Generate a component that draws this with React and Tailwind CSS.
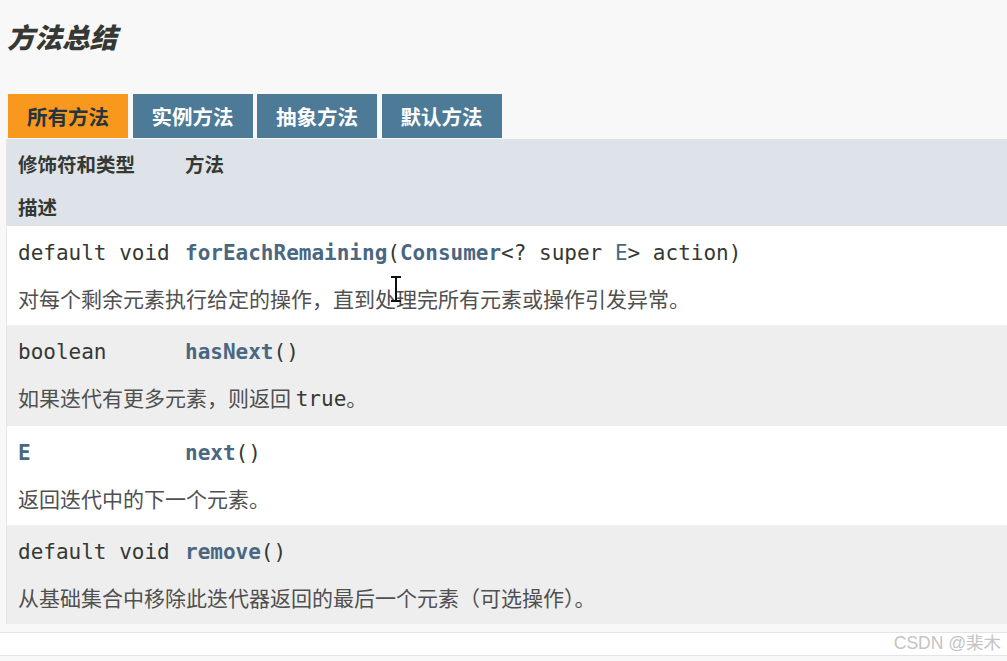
import React from "react";

const mono = "font-['DejaVu_Sans_Mono',monospace]";
const cjk = "font-['Noto_Sans_CJK_SC',sans-serif]";

function Link({ children, className = "" }) {
  return <span className={`text-[#4a6782] font-bold ${className}`}>{children}</span>;
}

function Row({ bg, type, method, desc }) {
  return (
    <div className={`grid grid-cols-[167px_1fr] ${bg}`}>
      <div className={`pl-[11px] pt-[13px] pb-[4px] ${mono} text-[21px] leading-[29px] text-[#353833] whitespace-nowrap`}>
        {type}
      </div>
      <div className={`pl-[11px] pt-[13px] pb-[4px] ${mono} text-[21px] leading-[29px] text-[#353833] whitespace-nowrap`}>
        {method}
      </div>
      <div className={`col-span-2 pl-[11px] pt-[12px] pb-[12px] ${cjk} text-[21px] leading-[29px] text-[#505050] whitespace-nowrap`}>
        {desc}
      </div>
    </div>
  );
}

export default function App() {
  const tabs = [
    { label: "所有方法", active: true },
    { label: "实例方法" },
    { label: "抽象方法" },
    { label: "默认方法" },
  ];

  return (
    <div className="relative w-[1007px] h-[661px] overflow-hidden bg-[#f8f8f8]">
      {/* Title */}
      <h3 className={`pl-[7px] pt-[17px] ${cjk} text-[27.5px] leading-[38px] font-black italic text-[#353833]`}>
        方法总结
      </h3>

      {/* Tabs */}
      <div className="flex gap-[4.5px] pl-[8px] mt-[39px]">
        {tabs.map((t) => (
          <div
            key={t.label}
            className={`w-[120px] h-[44px] flex items-center justify-center ${cjk} text-[20.5px] font-bold ${
              t.active ? "bg-[#f8981d] text-[#253441]" : "bg-[#4d7a97] text-white"
            }`}
          >
            {t.label}
          </div>
        ))}
      </div>

      {/* Table */}
      <div className="ml-[6px] mt-[1px] border-l border-[#e6e6e6]">
        <div className={`grid grid-cols-[167px_1fr] bg-[#dee3e9] ${cjk} text-[19.5px] leading-[26px] font-bold text-[#353833]`}>
          <div className="pl-[11px] pt-[12px] pb-[5px]">修饰符和类型</div>
          <div className="pl-[11px] pt-[12px] pb-[5px]">方法</div>
          <div className="col-span-2 pl-[11px] pt-[12px] pb-[6px]">描述</div>
        </div>

        <Row
          bg="bg-white"
          type="default void"
          method={
            <>
              <Link>forEachRemaining</Link>(<Link>Consumer</Link>&lt;? super <Link className="font-normal">E</Link>&gt; action)
            </>
          }
          desc="对每个剩余元素执行给定的操作，直到处理完所有元素或操作引发异常。"
        />
        <Row
          bg="bg-[#eeeeee]"
          type="boolean"
          method={
            <>
              <Link>hasNext</Link>()
            </>
          }
          desc={
            <>
              如果迭代有更多元素，则返回 <span className={`${mono} text-[#353833]`}>true</span>。
            </>
          }
        />
        <Row
          bg="bg-white"
          type={<Link>E</Link>}
          method={
            <>
              <Link>next</Link>()
            </>
          }
          desc="返回迭代中的下一个元素。"
        />
        <Row
          bg="bg-[#eeeeee]"
          type="default void"
          method={
            <>
              <Link>remove</Link>()
            </>
          }
          desc="从基础集合中移除此迭代器返回的最后一个元素（可选操作）。"
        />
      </div>

      {/* Next section strip */}
      <div className="mt-[8px] h-[24px] bg-white border-y border-[#e4e4e4]" />

      {/* Watermark */}
      <div className="absolute right-[6px] top-[630px] font-['Liberation_Sans','Noto_Sans_CJK_SC',sans-serif] text-[17.5px] text-[#c4c4c4]">
        CSDN @棐木
      </div>

      {/* Text cursor */}
      <svg className="absolute left-[390px] top-[276px]" width="12" height="26" viewBox="0 0 12 26">
        <path d="M1 1h10M1 25h10M6 1v24" stroke="#111" strokeWidth="2" fill="none" />
      </svg>
    </div>
  );
}
